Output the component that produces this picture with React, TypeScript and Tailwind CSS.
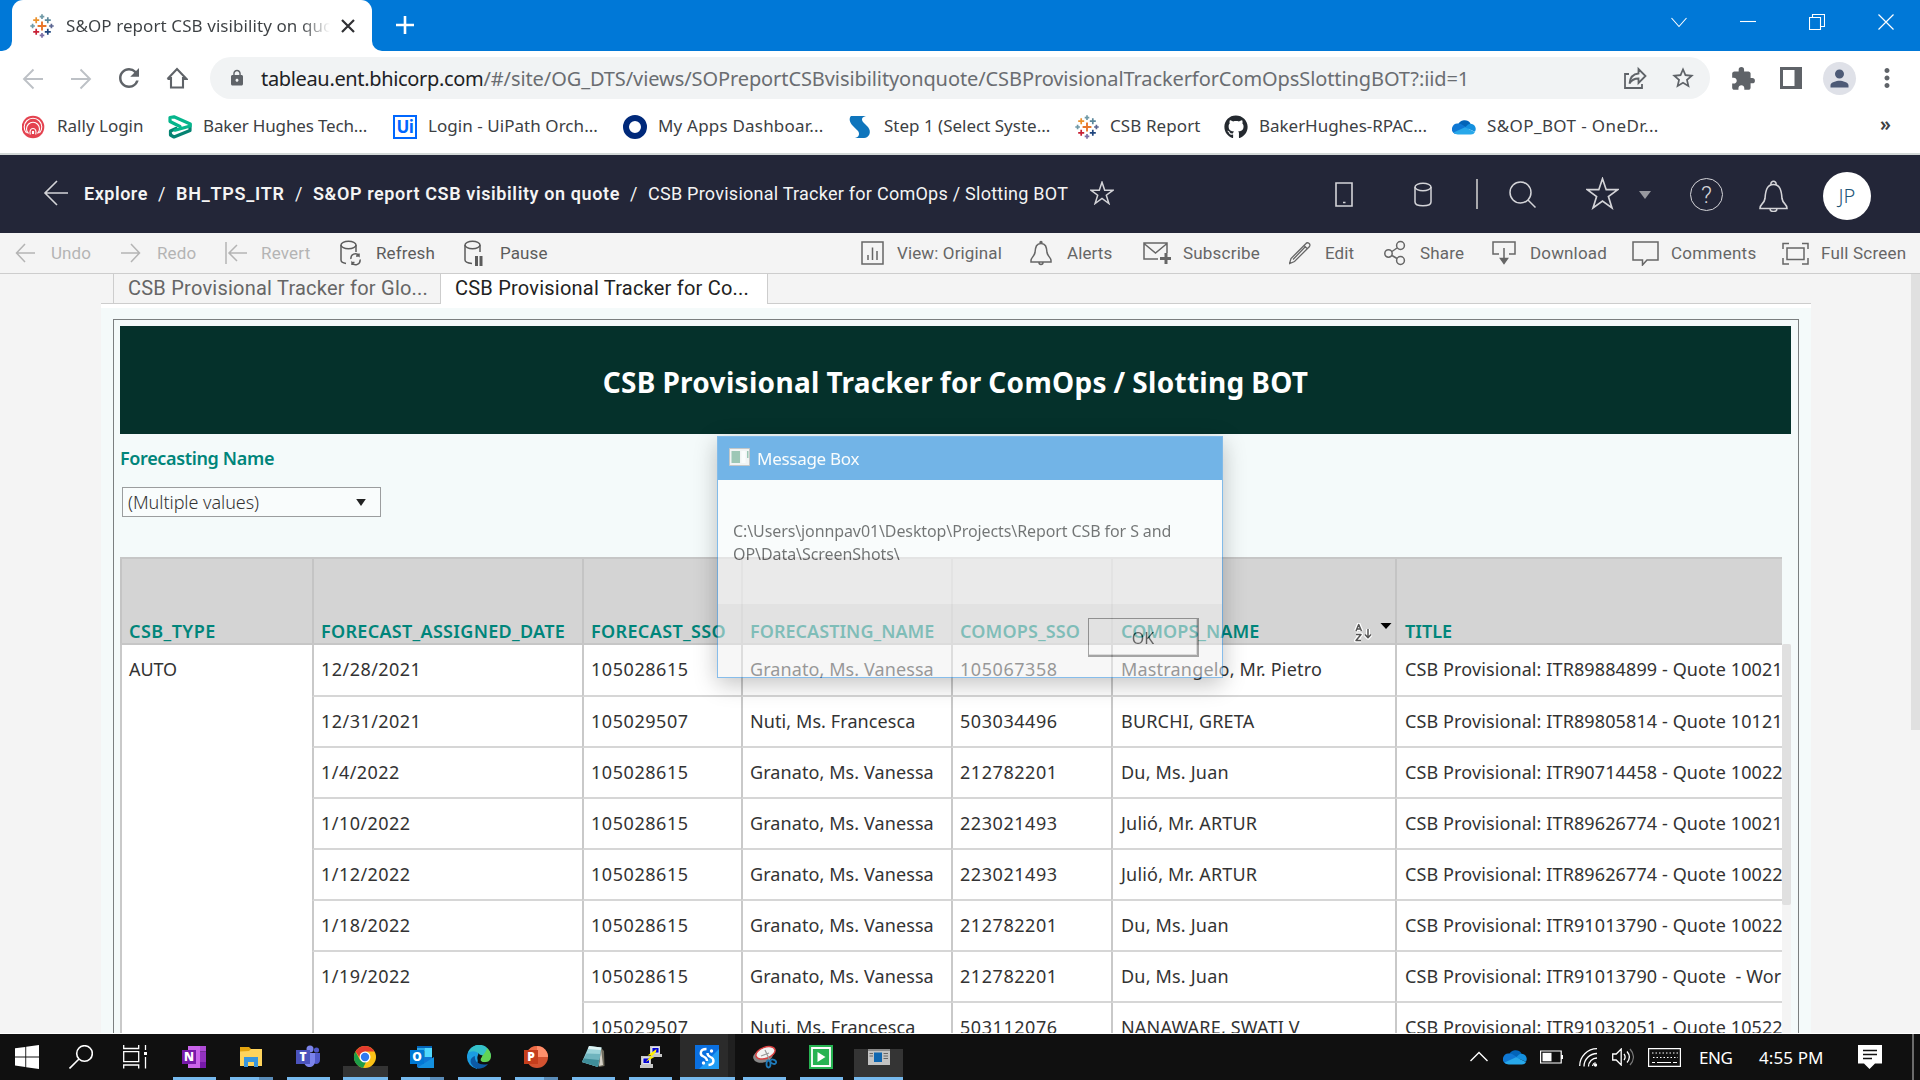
import type { ReactNode } from "react";
import { FaGithub } from "react-icons/fa";
import { MdExtension, MdLock, MdMoreVert, MdPerson, MdRefresh, MdStarBorder } from "react-icons/md";

type IconProps = { className?: string; box?: string; children: ReactNode; sw?: number };

function Line({ className = "size-6", box = "0 0 24 24", sw = 1.6, children }: IconProps) {
  return (
    <svg className={`shrink-0 ${className}`} viewBox={box} fill="none" stroke="currentColor" strokeWidth={sw}>
      {children}
    </svg>
  );
}

const STAR = "M12 1.2l2.7 8h8.4l-6.8 5 2.6 8.3-6.9-5-6.9 5 2.6-8.3-6.8-5h8.4z";

function TableauMark() {
  const marks: [number, number, number, string][] = [
    [12, 12, 4.4, "#e8762c"],
    [6.2, 6.2, 3, "#eb912c"],
    [17.8, 6.2, 3, "#5b879b"],
    [6.2, 17.8, 3, "#c72035"],
    [17.8, 17.8, 3, "#1f457e"],
    [12, 2.6, 2.3, "#7099a6"],
    [12, 21.4, 2.3, "#7b6fa6"],
    [2.6, 12, 2.3, "#7099a6"],
    [21.4, 12, 2.3, "#5b6591"],
  ];
  return (
    <svg className="size-6 shrink-0" viewBox="0 0 24 24" fill="none">
      {marks.map(([x, y, r, c], i) => (
        <path key={i} stroke={c} strokeWidth={r > 4 ? 1.9 : 1.7} d={`M${x - r} ${y}h${r * 2}M${x} ${y - r}v${r * 2}`} />
      ))}
    </svg>
  );
}

function Cloud() {
  return (
    <svg className="size-6 shrink-0" viewBox="0 0 24 24">
      <path fill="#0364b8" d="M6 10a7 7 0 0 1 12.500-1.500L14 15 6 12z" />
      <path fill="#0f78d4" d="M6.500 8.500a5.700 5.700 0 0 1 3 .8L17 14 3 19A5.600 5.600 0 0 1 6.500 8.500z" />
      <path fill="#1490df" d="M18.500 8.700a5.300 5.300 0 0 1 4.500 8L13 12.500l3-2.900a5.300 5.300 0 0 1 2.500-.9z" />
      <path fill="#28a8ea" d="M13 12.300l10 4.600a4.500 4.500 0 0 1-4.200 2.600H5.800a5.700 5.700 0 0 1-4.300-2.100z" />
    </svg>
  );
}

/* ---------- Browser chrome ---------- */

function TabStrip() {
  return (
    <div className="flex h-[51px] items-start bg-[#0078d7] text-white">
      <div className="flex h-[51px] w-3 items-end bg-white">
        <div className="h-[51px] w-3 rounded-br-[10px] bg-[#0078d7]" />
      </div>
      <div className="flex h-[51px] w-[360px] items-center rounded-t-[11px] bg-white pl-[18px]">
        <TableauMark />
        <div className="ml-3 w-[264px] overflow-hidden whitespace-nowrap bg-[linear-gradient(to_right,#3c4043_235px,transparent_264px)] bg-clip-text text-[17px] tracking-[0.08px] text-transparent">
          S&amp;OP report CSB visibility on quote
        </div>
        <Line className="ml-2.5 size-4 text-[#303134]" box="0 0 16 16" sw={2.2}>
          <path d="M2 2l12 12M14 2L2 14" />
        </Line>
      </div>
      <div className="h-[51px] w-3 bg-white">
        <div className="h-[51px] w-3 rounded-bl-[10px] bg-[#0078d7]" />
      </div>
      <Line className="ml-3 mt-[16px] size-[18px]" box="0 0 18 18" sw={2.6}>
        <path d="M9 0v18M0 9h18" />
      </Line>
      <div className="ml-auto mr-[26px] flex h-[43px] items-center gap-[53px]">
        <Line className="size-4" box="0 0 16 16" sw={1.1}>
          <path d="M.5 4l7.500 8.500 7.500-8.500" />
        </Line>
        <Line className="size-4" box="0 0 16 16" sw={1.1}>
          <path d="M0 7.500h16" />
        </Line>
        <Line className="size-4" box="0 0 16 16" sw={1.1}>
          <path d="M.5 3.500h11v12H.5zM3.500 3.500v-3h12v12h-4" />
        </Line>
        <Line className="size-4" box="0 0 16 16" sw={1.2}>
          <path d="M.5 .5l15 15M15.500 .5l-15 15" />
        </Line>
      </div>
    </div>
  );
}

function AddressBar() {
  return (
    <div className="flex h-[55px] items-center bg-white pt-px text-[#5f6368]">
      <Line className="ml-[22px] size-[22px] text-[#bdc1c6]" box="0 0 22 22" sw={1.9}>
        <path d="M21 11H2M11.500 1.500L2 11l9.500 9.500" />
      </Line>
      <Line className="ml-[26px] size-[22px] text-[#bdc1c6]" box="0 0 22 22" sw={1.9}>
        <path d="M1 11h19M10.500 1.500L20 11l-9.500 9.500" />
      </Line>
      <MdRefresh className="relative -top-px ml-[22px] size-[30px]" />
      <Line className="relative -top-px ml-[22px] size-[22px]" box="0 0 22 22" sw={2.100}>
        <path d="M5 10v10.500h12V10M1.500 12L11 2l9.500 10h-3.500M1.500 12H5" />
      </Line>
      <div className="relative -top-px ml-[22px] flex h-[42px] w-[1500px] items-center rounded-full bg-[#f1f3f4]">
        <MdLock className="ml-[18px] size-[18px]" />
        <span className="ml-[15px] w-[1343px] pt-px text-[20px] whitespace-nowrap text-[#6a6d71]">
          <span className="tracking-[-0.34px] text-[#202124]">tableau.ent.bhicorp.com</span>
          <span className="tracking-[-0.09px]">
            /#/site/OG_DTS/views/SOPreportCSBvisibilityonquote/CSBProvisionalTrackerforComOpsSlottingBOT?:iid=1
          </span>
        </span>
        <Line className="ml-[19px] size-[24px]" sw={1.800}>
          <path d="M6 8H2v14h17v-4M6.500 17.500c.5-6 3.500-9.500 9-10V3l7 7-7 7v-4.500c-4 0-7 1.500-9 5z" />
        </Line>
        <MdStarBorder className="ml-[23px] size-[26px]" />
      </div>
      <MdExtension className="ml-[20px] size-[26px]" />
      <Line className="relative -top-px ml-[24px] size-[22px]" box="0 0 22 22" sw={3}>
        <path d="M1.500 1.500h19v19h-19z" />
        <path d="M17.500 2v18" strokeWidth={6} />
      </Line>
      <div className="relative -top-px ml-[21px] flex size-[33px] items-center justify-center rounded-full bg-[#dfe1e8] text-[#4d5a76]">
        <MdPerson className="size-[27px]" />
      </div>
      <MdMoreVert className="relative -top-px ml-[16px] size-[30px]" />
    </div>
  );
}

const bookmarks: { label: string; width: string; icon: ReactNode }[] = [
  {
    label: "Rally Login",
    width: "w-[146px] tracking-[0px]",
    icon: (
      <svg className="size-6" viewBox="0 0 24 24">
        <circle cx="11" cy="12" r="11.300" fill="#e4424f" />
        <g fill="none" stroke="#fff" strokeWidth="1.100">
          <path d="M4.500 18a8.800 8.800 0 1 1 13 0M6.500 18.500a6.500 6.500 0 1 1 9 0M8.300 19.500c-1-3.500.2-6 2.700-6s3.700 2.500 2.700 6M10.500 19v-2.500h1V19" />
        </g>
      </svg>
    ),
  },
  {
    label: "Baker Hughes Tech...",
    width: "w-[225px] tracking-[-0.15px]",
    icon: (
      <svg className="size-6" viewBox="0 0 24 24" fill="none" strokeWidth="3.200" strokeLinejoin="round" strokeLinecap="round">
        <path stroke="#058372" d="M8 13.500L2.500 16v4l3.500 2 16-6.500v-3.500" />
        <path stroke="#05b58c" d="M7 15.200L22.300 11V9L6 1.800 2 2.500v4L12 11.500" />
      </svg>
    ),
  },
  {
    label: "Login - UiPath Orch...",
    width: "w-[230px] tracking-[0.05px]",
    icon: (
      <div className="flex size-6 items-center justify-center border-2 border-[#0067ff] bg-white font-['Open_Sans'] text-[17px] leading-none font-bold text-[#0067ff] tracking-[-0.5px]">
        Ui
      </div>
    ),
  },
  {
    label: "My Apps Dashboar...",
    width: "w-[226px] tracking-[0.2px]",
    icon: <div className="size-6 rounded-full border-[6px] border-[#00297a]" />,
  },
  {
    label: "Step 1 (Select Syste...",
    width: "w-[226px] tracking-[0px]",
    icon: (
      <svg className="size-6" viewBox="0 0 24 24">
        <path fill="#0f75bc" d="M2 1h15c-4 1-5 3-3 6l5 5c4 5 1 11-4 11H6c4-1 5-4 3-7L4 11C0 7 0 3 2 1z" />
      </svg>
    ),
  },
  { label: "CSB Report", width: "w-[149px] tracking-[0.1px]", icon: <TableauMark /> },
  { label: "BakerHughes-RPAC...", width: "w-[228px] tracking-[-0.03px]", icon: <FaGithub className="size-6 text-[#24292f]" /> },
  { label: "S&OP_BOT - OneDr...", width: "w-[300px] tracking-[0.4px]", icon: <Cloud /> },
];

function BookmarksBar() {
  return (
    <div className="flex h-[49px] items-center border-b-2 border-[#d3d8d7] bg-white pb-[6px] pl-[22px] text-[17px] text-[#3c4043]">
      {bookmarks.map((b) => (
        <div key={b.label} className={`flex shrink-0 items-center gap-3 whitespace-nowrap ${b.width}`}>
          {b.icon}
          <span className="-ml-px pb-px">{b.label}</span>
        </div>
      ))}
      <span className="ml-auto mr-[29px] pb-1 text-[19px] font-semibold">»</span>
    </div>
  );
}

/* ---------- Tableau ---------- */

function SiteHeader() {
  return (
    <div className="flex h-[78px] items-center bg-[#232638] font-['Roboto',sans-serif] text-[18px] text-[#f4f4f4]">
      <Line className="relative -top-px ml-[43px] size-[26px] text-[#d4d4d8]" box="0 0 26 26" sw={1.600}>
        <path d="M25 13H2M14 1L2 13l12 12" />
      </Line>
      <div className="ml-[15px] flex pb-[2px] font-semibold whitespace-nowrap">
        <span className="w-[74px] tracking-[0.52px]">Explore</span>
        <span className="w-[18px] font-normal">/</span>
        <span className="w-[119px] tracking-[0.75px]">BH_TPS_ITR</span>
        <span className="w-[18px] font-normal">/</span>
        <span className="w-[317px] tracking-[0.61px]">S&amp;OP report CSB visibility on quote</span>
        <span className="w-[18px] font-normal">/</span>
        <span className="w-[442px] font-normal tracking-[0.25px]">CSB Provisional Tracker for ComOps / Slotting BOT</span>
      </div>
      <Line className="relative -top-px size-6 text-[#d4d4d8]" sw={1.500}>
        <path d={STAR} />
      </Line>
      <div className="mr-[49px] ml-auto flex items-center pt-[3px] text-[#d4d4d8]">
        <Line className="relative -top-px h-[25px] w-[18px]" box="0 0 18 25" sw={1.600}>
          <path d="M1 1h16v23H1zM8 20.500h2.500" />
        </Line>
        <Line className="relative -top-px ml-[61px] h-[25px] w-[18px]" box="0 0 18 25" sw={1.500}>
          <ellipse cx="9" cy="5" rx="8" ry="3.800" />
          <path d="M1 5v15c0 5 16 5 16 0V5" />
        </Line>
        <div className="relative -top-[2px] ml-[44px] h-[30px] w-0.5 bg-[#a9a9ad]" />
        <Line className="relative -top-px ml-[31px] size-[27px]" box="0 0 27 27" sw={1.500}>
          <circle cx="11.500" cy="11.500" r="10.500" />
          <path d="M19 19l7.500 7.500" />
        </Line>
        <Line className="relative -top-[2px] ml-[50px] size-[33px]" sw={1.200}>
          <path d={STAR} />
        </Line>
        <Line className="relative -top-px ml-[20px] size-3" box="0 0 12 12">
          <path d="M0 2h12L6 10z" fill="#97989f" stroke="none" />
        </Line>
        <div className="relative -top-px ml-[39px] flex size-[33px] items-center justify-center rounded-full border-[1.500px] border-[#d4d4d8] text-[24px] leading-none font-light">
          ?
        </div>
        <Line className="ml-[36px] h-[32px] w-[29px]" box="0 0 29 32" sw={1.600}>
          <path d="M1 28.500c0-5 4-4 5-10 .5-8 2-14 8.500-14s8 6 8.500 14c1 6 5 5 5 10zM11 28.500c0 4 7 4 7 0M12 5c-1-5 6-5 5 0" />
        </Line>
        <div className="ml-[35px] flex size-12 items-center justify-center rounded-full bg-white font-['Noto_Sans',sans-serif] text-[20px] font-light text-[#1f567a]">
          JP
        </div>
      </div>
    </div>
  );
}

const ToolIcon = ({ children }: { children: ReactNode }) => (
  <Line className="relative -top-px h-[26px] w-[28px]" box="0 0 28 26" sw={1.500}>
    {children}
  </Line>
);

const leftTools: { label: string; cls: string; icon: ReactNode }[] = [
  { label: "Undo", cls: "w-[106px] text-[#b4b4b4]", icon: <path d="M20 13H1.500M10 4l-8.500 9 8.500 9" /> },
  { label: "Redo", cls: "w-[104px] text-[#b4b4b4]", icon: <path d="M0 13h18.500M10 4l8.500 9-8.500 9" /> },
  { label: "Revert", cls: "w-[115px] text-[#b4b4b4] tracking-[0.2px]", icon: <path d="M1 2v22M22 13H5M12 5l-8 8 8 8" /> },
  {
    label: "Refresh",
    cls: "w-[124px] text-[#5c5c5c]",
    icon: (
      <>
        <ellipse cx="8.500" cy="5" rx="7.500" ry="3.800" />
        <path d="M1 5v15c0 2 2 3 5 3.500M16 5v7M11 19a4.500 4.500 0 0 1 8-3.500v-2M20 19.500a4.500 4.500 0 0 1-8 3.500v2M16 16h3.500M11.500 22.500h3" />
      </>
    ),
  },
  {
    label: "Pause",
    cls: "w-[120px] text-[#5c5c5c]",
    icon: (
      <>
        <ellipse cx="8.500" cy="5" rx="7.500" ry="3.800" />
        <path d="M1 5v15c0 2 2 3 7 3.500M16 5v7" />
        <path strokeWidth="3" d="M12.500 16v10M17 16v10" />
      </>
    ),
  },
];

const rightTools: { label: string; cls: string; pad: string; icon: ReactNode }[] = [
  { label: "View: Original", cls: "w-[169px] tracking-[0.13px]", pad: "ml-[8px]", icon: <path d="M1 2h21v22H1zM7 20v-5M11.500 20V7.500M16 20V11" /> },
  {
    label: "Alerts",
    cls: "w-[113px]",
    pad: "ml-[9px]",
    icon: <path d="M1 20.500c0-3 3-3.500 4-8 .5-6 1.500-9 6-9s5.500 3 6 9c1 4.500 4 5 4 8v1.500H1zM9 22.500c0 2.500 4 2.500 4 0M10 3c0-2 2-2 2 0" />,
  },
  {
    label: "Subscribe",
    cls: "w-[146px] tracking-[0.2px]",
    pad: "ml-[12px]",
    icon: (
      <>
        <path d="M15 19H1V3h23v10M1 3.500L12.500 13 24 3.500" />
        <path strokeWidth="3" d="M23 13v11M17 18.500h11" />
      </>
    ),
  },
  { label: "Edit", cls: "w-[95px]", pad: "ml-[8px]", icon: <path d="M.5 23.500l1.500-5L17 3.500c1.500-2 5 .5 3.500 3L5.500 21.500zM15 5.500l3.500 3.500M4 19.500L16.500 6.500" strokeWidth="1.300" /> },
  {
    label: "Share",
    cls: "w-[108px] tracking-[0.2px]",
    pad: "ml-[8px]",
    icon: (
      <>
        <circle cx="4.500" cy="13.500" r="3.700" />
        <circle cx="16.500" cy="5.500" r="3.900" />
        <circle cx="16.500" cy="20.500" r="3.900" />
        <path d="M8 11.500l5-3.500M8 15.500l5 3" />
      </>
    ),
  },
  {
    label: "Download",
    cls: "w-[140px] tracking-[0.15px]",
    pad: "ml-[10px]",
    icon: (
      <>
        <path d="M7 14H1V2h22v12h-6M12 8v12" />
        <path fill="currentColor" d="M8.500 18.500h7L12 23.500z" />
      </>
    ),
  },
  { label: "Comments", cls: "w-[150px] tracking-[0.27px]", pad: "ml-[11px]", icon: <path d="M1 2h25v18H15l-4.500 5v-5H1z" /> },
  {
    label: "Full Screen",
    cls: "w-[130px] tracking-[0.2px]",
    pad: "ml-[11px]",
    icon: <path d="M1 9V3.500h6M20 3.500h6V9M1 18v6h6M20 24h6v-6M5 8h17v11.500H5z" />,
  },
];

function Toolbar() {
  return (
    <div className="flex h-[41px] items-center border-b border-[#cdcdcd] bg-[#f4f4f4] pt-px font-['Roboto',sans-serif] text-[17px] tracking-[0.1px] whitespace-nowrap text-[#666]">
      <div className="flex pl-[15px]">
        {leftTools.map((t) => (
          <div key={t.label} className={`flex items-center gap-2 ${t.cls}`}>
            <ToolIcon>{t.icon}</ToolIcon>
            <span>{t.label}</span>
          </div>
        ))}
      </div>
      <div className="ml-auto mr-[8px] flex">
        {rightTools.map((t) => (
          <div key={t.label} className={`flex items-center ${t.cls}`}>
            <ToolIcon>{t.icon}</ToolIcon>
            <span className={t.pad}>{t.label}</span>
          </div>
        ))}
      </div>
    </div>
  );
}

function SheetTabs() {
  return (
    <div className="flex h-[30px] w-[1710px] shrink-0 font-['Roboto',sans-serif] text-[20px] leading-[28px] whitespace-nowrap">
      <div className="w-3 border-b border-[#cdcdcd]" />
      <div className="w-[327px] border-b border-l border-[#cdcdcd] pl-[14px] tracking-[0.23px] text-[#666]">
        CSB Provisional Tracker for Glo...
      </div>
      <div className="w-[328px] border-x border-[#cdcdcd] bg-white pl-[14px] tracking-[0.22px] text-[#222]">
        CSB Provisional Tracker for Co...
      </div>
      <div className="flex-1 border-b border-[#cdcdcd]" />
    </div>
  );
}

const columns: { name: string; cls: string; track: string }[] = [
  { name: "CSB_TYPE", cls: "w-[192px] pl-[7px]", track: "tracking-[0.45px]" },
  { name: "FORECAST_ASSIGNED_DATE", cls: "w-[270px] pl-[7px]", track: "tracking-[0.3px]" },
  { name: "FORECAST_SSO", cls: "w-[159px] pl-[7px]", track: "tracking-[0.35px]" },
  { name: "FORECASTING_NAME", cls: "w-[210px] pl-[7px]", track: "tracking-[0.03px]" },
  { name: "COMOPS_SSO", cls: "w-[160px] pl-[7px]", track: "tracking-[0.13px]" },
  { name: "COMOPS_NAME", cls: "w-[284px] pl-[8px]", track: "tracking-[0.03px]" },
  { name: "TITLE", cls: "w-[387px] pl-[8px]", track: "tracking-[0px]" },
];

const G = "Granato, Ms. Vanessa";
const N = "Nuti, Ms. Francesca";
const rows: string[][] = [
  ["AUTO", "12/28/2021", "105028615", G, "105067358", "Mastrangelo, Mr. Pietro", "CSB Provisional: ITR89884899 - Quote 10021"],
  ["", "12/31/2021", "105029507", N, "503034496", "BURCHI, GRETA", "CSB Provisional: ITR89805814 - Quote 10121"],
  ["", "1/4/2022", "105028615", G, "212782201", "Du, Ms. Juan", "CSB Provisional: ITR90714458 - Quote 10022"],
  ["", "1/10/2022", "105028615", G, "223021493", "Julió, Mr. ARTUR", "CSB Provisional: ITR89626774 - Quote 10021"],
  ["", "1/12/2022", "105028615", G, "223021493", "Julió, Mr. ARTUR", "CSB Provisional: ITR89626774 - Quote 10022"],
  ["", "1/18/2022", "105028615", G, "212782201", "Du, Ms. Juan", "CSB Provisional: ITR91013790 - Quote 10022"],
  ["", "1/19/2022", "105028615", G, "212782201", "Du, Ms. Juan", "CSB Provisional: ITR91013790 - Quote  - Work"],
  ["", "", "105029507", N, "503112076", "NANAWARE, SWATI V", "CSB Provisional: ITR91032051 - Quote 10522"],
];

const bodyTrack = [
  "tracking-[-0.1px]",
  "tracking-[0.45px]",
  "tracking-[0.55px]",
  "tracking-[0.09px]",
  "tracking-[0.55px]",
  "tracking-[0.19px]",
  "tracking-[0.11px]",
];

function SortMark() {
  return (
    <div className="mr-[3px] ml-auto flex items-start">
      <svg className="mt-[3px] h-[20px] w-[19px]" viewBox="0 0 19 20" fill="none" strokeLinejoin="round">
        {["#fff", "#555"].map((c, i) => (
          <path key={c} stroke={c} strokeWidth={i ? 1.500 : 4} d="M2 8l2.700-6.500L7.500 8M3 6h3.500M2 11.500h5l-5 6h5M14 6v8M11 11.500l3 3.200 3-3.200" />
        ))}
      </svg>
      <svg className="mt-[2px] ml-[7px] h-[8px] w-[12px]" viewBox="0 0 12 8">
        <path d="M.5 1h11L6 7z" />
      </svg>
    </div>
  );
}

function Table() {
  return (
    <div className="flex h-[480px] w-[1671px]">
      <div className="w-[1662px] overflow-hidden text-[18px] whitespace-nowrap">
        <div className="flex h-[88px] border-y-2 border-[#c6c6c6] bg-[#d4d4d4] font-semibold text-[#00857a]">
          {columns.map((c) => (
            <div key={c.name} className={`flex shrink-0 items-end border-l-2 border-[#c4c4c4] leading-[24px] ${c.cls} ${c.track}`}>
              {c.name}
              {c.name === "COMOPS_NAME" && <SortMark />}
            </div>
          ))}
        </div>
        {rows.map((r, ri) => (
          <div key={ri} className={`flex bg-white text-[#333] ${ri === 0 ? "h-[51.600px]" : "h-[51.080px]"}`}>
            {r.map((v, ci) => (
              <div
                key={ci}
                className={`flex shrink-0 items-center border-l-2 border-l-[#c9c9c9] leading-none whitespace-pre ${columns[ci].cls} ${bodyTrack[ci]} ${
                  ci === 0 || (ci === 1 && ri === 6) ? "pb-[3px]" : "border-b-2 border-b-[#d6d6d6] pb-px"
                }`}
              >
                {v}
              </div>
            ))}
          </div>
        ))}
      </div>
      <div className="mt-[87px] w-[9px] bg-[#f4f4f4]">
        <div className="h-[261px] w-[9px] rounded-[2px] bg-[#e0e0e0]" />
      </div>
    </div>
  );
}

function Dashboard() {
  return (
    <div className="flex h-[730px] w-[1710px] flex-col border-t-4 border-white bg-[#f4fafa] px-3 pt-[11px]">
      <div className="h-[720px] w-[1686px] border border-[#7b7f80] pl-[6px]">
        <div className="mt-[6px] flex h-[108px] w-[1671px] items-center justify-center bg-[#05312b] pt-[4px] text-[28px] font-bold tracking-[0.3px] [word-spacing:-0.8px] text-white">
          CSB Provisional Tracker for ComOps / Slotting BOT
        </div>
        <div className="mt-[12px] h-[25px] text-[18px] leading-[25px] font-semibold tracking-[-0.35px] text-[#00857a]">Forecasting Name</div>
        <div className="mt-[16px] ml-[2px] flex h-[30px] w-[259px] items-center border border-[#9b9d9e] bg-[#f9fcfc] pl-[5px] text-[18px] font-light tracking-[-0.05px] text-[#333]">
          (Multiple values)
          <svg className="mr-[14px] ml-auto h-[7px] w-[10px]" viewBox="0 0 11 8">
            <path d="M0 0h11L5.500 8z" fill="#222" />
          </svg>
        </div>
        <div className="mt-[40px]">
          <Table />
        </div>
      </div>
    </div>
  );
}

function MessageBox() {
  return (
    <div className="absolute top-[436px] left-[717px] flex h-[242px] w-[506px] flex-col border border-[#1e84da] bg-white opacity-[0.530] shadow-[0_6px_22px_rgba(0,0,0,0.450)]">
      <div className="flex h-[43px] items-center bg-[#0078d7] pt-px pl-[11px] text-[17px] tracking-[-0.28px] text-white">
        <svg className="mb-[5px] h-[18px] w-[21px]" viewBox="0 0 21 18">
          <path fill="#f0f0f0" stroke="#9a9a9a" d="M.5 .5h20v17H.5z" />
          <path fill="#4f9a7a" d="M2.500 3h8.500v12H2.500z" />
          <path fill="#fff" d="M12.500 3h4v12h-4z" />
          <path fill="#4f9a7a" d="M18 3h1.500v7H18z" />
        </svg>
        <span className="ml-[7px]">Message Box</span>
      </div>
      <div className="flex-1 pt-[40px] pl-[15px] text-[16px] leading-[23px] whitespace-nowrap text-black">
        <div className="tracking-[-0.1px]">C:\Users\jonnpav01\Desktop\Projects\Report CSB for S and</div>
        <div className="tracking-[-0.06px]">OP\Data\ScreenShots\</div>
      </div>
      <div className="flex h-[73px] justify-end bg-[#f0f0f0] pt-[14px] pr-[23px]">
        <div className="flex h-[39px] w-[111px] items-center justify-center border border-r-2 border-b-2 border-[#555] pt-[2px] text-[16px] text-black shadow-[inset_-1px_-1px_0_#bbb]">
          OK
        </div>
      </div>
    </div>
  );
}

/* ---------- Taskbar ---------- */

type TaskApp = { cls: string; icon: ReactNode; split?: boolean };

const Glyph = ({ children }: { children: ReactNode }) => (
  <svg className="size-6" viewBox="0 0 24 24">
    {children}
  </svg>
);

const Tile = ({ color, children }: { color: string; children: ReactNode }) => (
  <div className={`absolute top-[5px] left-0 flex size-[14px] items-center justify-center font-['Open_Sans'] text-[12px] leading-none font-extrabold text-white ${color}`}>
    {children}
  </div>
);

const apps: TaskApp[] = [
  {
    cls: "w-[43px]",
    icon: (
      <div className="relative -left-[0.500px]">
        <Glyph>
          <path fill="#ca64ea" d="M6 1h12v22H6z" />
          <path fill="#ae4bd5" d="M18 1h6v5.500h-6z" />
          <path fill="#9332bf" d="M18 6.500h6V12h-6z" />
          <path fill="#7719aa" d="M18 12h6v11h-6zM0 5h14v14H0z" />
          <path fill="#9332bf" d="M18 12h6v5h-6z" />
        </Glyph>
        <Tile color="bg-[#7719aa]">N</Tile>
      </div>
    ),
  },
  {
    cls: "ml-[14px] w-[43px]",
    split: true,
    icon: (
      <div className="mr-[2px]">
        <Glyph>
          <path fill="#e5a50f" d="M1 2h9l2 2v4H1z" />
          <path fill="#ffd45c" d="M1 6.500L10 6l2-2h11v17H1z" />
          <path fill="#3a96dd" d="M5 12h14v10h-4v-5H9v5H5z" />
        </Glyph>
      </div>
    ),
  },
  {
    cls: "ml-[14px] w-[43px]",
    icon: (
      <div className="relative -left-[0.500px]">
        <Glyph>
          <circle cx="14" cy="4" r="3.500" fill="#7b83eb" />
          <circle cx="20.500" cy="5" r="2.600" fill="#5059c9" />
          <path fill="#5059c9" d="M17 8h7v7c0 5-7 5-7 1z" />
          <path fill="#7b83eb" d="M8 8h11v8c0 8-11 8-11 0z" />
        </Glyph>
        <Tile color="bg-[#4b53bc]">T</Tile>
      </div>
    ),
  },
  {
    cls: "ml-[13px] w-[45px] bg-[linear-gradient(to_bottom,transparent_32px,#343434_32px)]",
    icon: (
      <div className="mr-[2px]">
        <Glyph>
          <circle cx="12" cy="12" r="11" fill="#fbc116" />
          <path fill="#1e9c48" d="M2.500 6.500L7 15l6 2-3 6A11 11 0 0 1 2.500 6.500z" />
          <path fill="#e33b2e" d="M2.500 6.500A11 11 0 0 1 21.500 6.500H12L7 13z" />
          <circle cx="12" cy="12" r="5.500" fill="#fff" />
          <circle cx="12" cy="12" r="4.200" fill="#3079ee" />
        </Glyph>
      </div>
    ),
  },
  {
    cls: "ml-[13px] w-[43px]",
    split: true,
    icon: (
      <div className="relative -left-[0.500px]">
        <Glyph>
          <path fill="#0364b8" d="M7 1h15v5H7z" />
          <path fill="#28a8ea" d="M7 3h7.500v9H7z" />
          <path fill="#50d9ff" d="M14.500 3H22v9h-7.500z" />
          <path fill="#0f78d4" d="M7 12h15v10H7z" />
          <path fill="#1490df" d="M24 12v11H7z" />
        </Glyph>
        <Tile color="bg-[#0078d4]">O</Tile>
      </div>
    ),
  },
  {
    cls: "ml-[14px] w-[43px]",
    icon: (
      <div className="relative -left-[0.500px]">
        <Glyph>
          <path fill="#1b9de2" d="M0 12A12 12 0 0 1 12 0l-2 24A12 12 0 0 1 0 12z" />
          <path fill="#35c1c9" d="M1 8C4-1 16-3 21 4c2 2 3 5 3 8L13 10C9 5 4 6 1 8z" />
          <path fill="#62d455" d="M20 3c5 4 6 13-1 14-5 1-7-1-5-4 2-4 5-5 6-10z" />
          <path fill="#0c59a4" d="M8 11c-1 6 5 10 13 8-4 5-12 7-16 1-3-4-1-8 3-9z" />
          <path fill="#101010" d="M11 10c3-1 5 1 3 3-2 4 3 5 7 4-5 4-13-1-10-7z" />
        </Glyph>
      </div>
    ),
  },
  {
    cls: "ml-[14px] w-[43px]",
    split: true,
    icon: (
      <div className="relative -left-[0.500px]">
        <Glyph>
          <circle cx="13" cy="12" r="11" fill="#d35230" />
          <path fill="#ff8f6b" d="M13 1a11 11 0 0 1 11 11H13z" />
          <path fill="#ed6c47" d="M13 1v11H2A11 11 0 0 1 13 1z" />
        </Glyph>
        <Tile color="bg-[#c43e1c]">P</Tile>
      </div>
    ),
  },
  {
    cls: "ml-[14px] w-[43px]",
    icon: (
      <div className="mr-[2px]">
        <Glyph>
          <path fill="#6d6a5c" d="M20 3l3 3 .5 15-5.500 1z" />
          <path fill="#d6d2c8" d="M20 4l2 16-4 1z" />
          <path fill="#9ed4da" d="M8 1l12.500 1.500L17 22 1 17z" />
          <path fill="#6fb4be" d="M5.500 8.500L19.500 9 17 22 1 17z" />
          <path fill="#3f8d99" d="M3 13.500l15 1.500-1 7L1 17z" />
          <path fill="#dff3f4" d="M8 1l12.500 1.500-.7 2.500L7 4z" />
        </Glyph>
      </div>
    ),
  },
  {
    cls: "ml-[14px] w-[43px]",
    icon: (
      <Glyph>
        <path fill="#c6c6c6" d="M11 1h10v8h2v3H12V9h-1zM2 11h10v8h2v4H1v-3h1z" />
        <path fill="#0000d8" stroke="#fff" strokeWidth=".8" d="M13 2.500h7V8h-7zM4 13h6.500v5.500H4z" />
        <path fill="#ffee00" d="M17.500 4l-9 6.500h4L6.500 17l9-5h-3.500l5-5z" />
      </Glyph>
    ),
  },
  {
    cls: "ml-[8px] w-[55px] bg-[linear-gradient(to_right,#2b2b2b_48px,#202020_48px)]",
    icon: (
      <div className="mr-[2px]">
        <Glyph>
          <path fill="#0a6fe0" d="M0 0h24v24H0z" />
          <path fill="#1f9bf3" d="M24 4v20H4z" />
          <path
            d="M11.500 4C4.500 4 4.500 10 8.500 11.500c2.500 1 3.500 2 3.500 4.500M13.500 20c6.500-.5 6-6.500 2-8-2-.8-3-1.800-3-4"
            fill="none"
            stroke="#fff"
            strokeWidth="2.400"
          />
          <circle cx="16.500" cy="6" r="1.700" fill="#fff" />
          <circle cx="8.500" cy="18" r="1.700" fill="#fff" />
        </Glyph>
      </div>
    ),
  },
  {
    cls: "ml-[8px] w-[43px]",
    icon: (
      <Glyph>
        <ellipse cx="10" cy="11" rx="10" ry="6.500" fill="#888" transform="rotate(-15 10 11)" />
        <ellipse cx="12.500" cy="8" rx="10" ry="5.500" fill="#f3f3f3" stroke="#d84141" strokeWidth="1.500" transform="rotate(-20 12 8)" />
        <path d="M12 5l5 11M8 11l8-3" stroke="#999" strokeWidth="1.200" />
        <g fill="none" stroke="#1e79b8" strokeWidth="1.800">
          <ellipse cx="15.500" cy="19" rx="2" ry="3.500" />
          <ellipse cx="20.500" cy="16.500" rx="3" ry="2" transform="rotate(25 20 16)" />
        </g>
      </Glyph>
    ),
  },
  {
    cls: "ml-[14px] w-[43px]",
    icon: (
      <div className="relative -left-[0.500px]">
        <Glyph>
          <path fill="#27b352" d="M0 0h24v24H0z" />
          <path fill="none" stroke="#fff" strokeWidth="1.800" d="M3 3h18v18H3z" />
          <path fill="#fff" d="M8.500 7l8 5-8 5z" />
        </Glyph>
      </div>
    ),
  },
  {
    cls: "ml-[11px] w-[49px] bg-[linear-gradient(to_bottom,transparent_15px,#343434_15px)]",
    icon: (
      <Glyph>
        <path fill="#c3c3c3" d="M1 4h22v16H1z" />
        <path fill="#8b8b8b" d="M1 4h22v2H1z" />
        <path fill="#0f66b0" d="M7 7.500h8V17H7z" />
        <path stroke="#666" d="M2.500 8.500h3.500M2.500 11h3.500M16.500 8.500H21M16.500 11H21M16.500 13.500H21" />
      </Glyph>
    ),
  },
];

function Taskbar() {
  return (
    <div className="flex h-[47px] border-t border-white bg-[#101010] text-white">
      <svg className="mt-[11px] ml-[15px] size-6" viewBox="0 0 24 24" fill="#fff">
        <path d="M0 3.300L10.300 1.900v9.500H0zM11.200 1.700L24 0v11.400H11.200zM0 12.400h10.300v9.600L0 20.600zM11.200 12.400H24V24l-12.800-1.800z" />
      </svg>
      <Line className="mt-[11px] ml-[30px] size-6" sw={1.600}>
        <circle cx="15.500" cy="8.500" r="7.800" />
        <path d="M10 14L.5 23.500" />
      </Line>
      <Line className="mt-[11px] ml-[30px] size-6" sw={1.300}>
        <path d="M.7 0v3.500h15V0M.7 6.700h15v10H.7zM.7 23.500V20h15v3.500M22.500 0v5M22.500 12v11.500" />
        <path fill="#fff" stroke="none" d="M21 7h3v3h-3z" />
      </Line>
      <div className="ml-[26px] flex h-[46px]">
        {apps.map((a, i) => (
          <div key={i} className={`flex flex-col items-center ${a.cls}`}>
            <div className="flex h-[43px] items-center pt-[3px]">{a.icon}</div>
            <div className="flex h-[3px] w-full bg-[#76b9ed]">{a.split && <div className="ml-auto w-[14px] bg-[#5a8cb8]" />}</div>
          </div>
        ))}
      </div>
      <div className="ml-auto flex h-[46px] items-center">
        <Line className="size-[18px]" box="0 0 18 18" sw={1.400}>
          <path d="M.5 13L9 4.500l8.500 8.500" />
        </Line>
        <div className="ml-[15px]">
          <Cloud />
        </div>
        <Line className="ml-[13px] h-[14px] w-[23px]" box="0 0 23 14" sw={1.200}>
          <path d="M.6 1h20.600v12H.6zM22.400 5v4" />
          <path fill="#fff" stroke="none" d="M2.500 2.800h9v8.500h-9z" />
        </Line>
        <Line className="ml-[16px] size-[19px]" box="0 0 19 19" sw={1.300}>
          <path d="M.7 18A17.500 17.500 0 0 1 18 .7M5 18.500A13 13 0 0 1 18 5.500M9.500 18.500a8.500 8.500 0 0 1 8.500-8.500M13.500 18a4.500 4.500 0 0 1 3-3.500" />
          <circle cx="16.500" cy="17" r="1" fill="#fff" />
        </Line>
        <Line className="ml-[14px] h-[18px] w-[22px]" box="0 0 22 18" sw={1.300}>
          <path d="M.7 6h3.500l5-5v16l-5-5H.7zM12 6c1.500 2 1.500 4 0 6M15 3.500c3 3.500 3 7.500 0 11" />
          <path stroke="#777" d="M18 1c4.500 5 4.500 11 0 16" />
        </Line>
        <Line className="ml-[14px] h-[19px] w-[33px]" box="0 0 33 19" sw={1.200}>
          <path d="M.6 .6h31.800v17.800H.6zM4 14.500h3M9 14.500h14M25 14.500h4" />
          <path strokeDasharray="1.500 2" d="M4 5h26M5 9.500h25" />
        </Line>
        <span className="ml-[18px] w-[60px] pt-px text-[17px] tracking-[-0.4px]">ENG</span>
        <span className="w-[99px] pt-px text-[17px] whitespace-nowrap tracking-[0.1px]">4:55 PM</span>
        <svg className="size-6" viewBox="0 0 24 24">
          <path fill="#fff" d="M0 0h24v18.500h-7L11.500 24 6 18.500H0z" />
          <path stroke="#101010" strokeWidth="1.300" d="M5 5.500h14M5 9.500h14M5 13.500h9" />
        </svg>
        <div className="mr-[6px] ml-[30px] h-[46px] w-[2px] bg-[#6b6b6b]" />
      </div>
    </div>
  );
}

export default function App() {
  return (
    <div className="relative flex h-[1080px] w-[1920px] flex-col overflow-hidden bg-[#f4f4f4] font-['Noto_Sans',sans-serif]">
      <TabStrip />
      <AddressBar />
      <BookmarksBar />
      <SiteHeader />
      <Toolbar />
      <div className="flex min-h-0 flex-1 overflow-hidden">
        <div className="ml-[101px] flex w-[1710px] flex-col">
          <SheetTabs />
          <Dashboard />
        </div>
        <div className="ml-auto h-[456px] w-[9px] bg-[#e0e0e0]" />
      </div>
      <Taskbar />
      <MessageBox />
    </div>
  );
}
